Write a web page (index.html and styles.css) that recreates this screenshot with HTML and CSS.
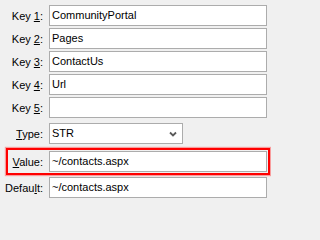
FILE: index.html
```html
<!DOCTYPE html>
<html>
<head>
<meta charset="utf-8">
<link rel="stylesheet" href="styles.css">
</head>
<body>
<div class="form">
  <div class="row"><span class="label">Key <u>1</u>:</span><div class="field">CommunityPortal</div></div>
  <div class="row"><span class="label">Key <u>2</u>:</span><div class="field">Pages</div></div>
  <div class="row"><span class="label">Key <u>3</u>:</span><div class="field">ContactUs</div></div>
  <div class="row"><span class="label">Key <u>4</u>:</span><div class="field">Url</div></div>
  <div class="row"><span class="label">Key <u>5</u>:</span><div class="field"></div></div>
  <div class="row row-type"><span class="label"><u>T</u>ype:</span>
    <div class="select"><span>STR</span>
      <svg class="chev" width="8" height="6" viewBox="0 0 8 6"><path d="M1 1.5 L4 4.5 L7 1.5" fill="none" stroke="#5a5a5a" stroke-width="1.8"/></svg>
    </div>
  </div>
  <div class="highlight">
    <div class="row row-inner"><span class="label label-inner"><u>V</u>alue:</span><div class="field">~/contacts.aspx</div></div>
  </div>
  <div class="row"><span class="label">Defau<u>l</u>t:</span><div class="field">~/contacts.aspx</div></div>
</div>
</body>
</html>
```
FILE: styles.css
```css
html, body {
  margin: 0;
  padding: 0;
  background: #f0f0f0;
  width: 271px;
  height: 202px;
  overflow: hidden;
}
.form {
  display: flex;
  flex-direction: column;
  padding-top: 5px;
  font-family: "Liberation Sans", Arial, sans-serif;
  font-size: 11px;
  color: #000;
}
.row {
  display: flex;
  align-items: center;
  height: 21px;
  margin: 0 4px 2px 0;
}
.label {
  width: 43px;
  padding-right: 6px;
  text-align: right;
  white-space: nowrap;
  flex: none;
}
.field {
  flex: 1;
  box-sizing: border-box;
  height: 21px;
  border: 1px solid #acacac;
  background: #fff;
  padding: 0 2px;
  line-height: 19px;
  white-space: nowrap;
}
.row-type {
  margin-top: 3px;
}
.select {
  box-sizing: border-box;
  width: 134px;
  height: 21px;
  border: 1px solid #acacac;
  background: #fff;
  padding: 0 2px;
  line-height: 19px;
  display: flex;
  align-items: center;
  justify-content: space-between;
  padding-right: 5px;
}
.chev {
  display: block;
  margin-top: 1px;
}
.highlight {
  margin: 2px 1px 2px 6px;
  border: 2px solid #ff0000;
  padding: 1px;
  box-shadow: 0 0 1px 1px rgba(255, 90, 90, 0.55);
}
.row-inner {
  margin: 0;
}
.label-inner {
  width: 34px;
}
```
